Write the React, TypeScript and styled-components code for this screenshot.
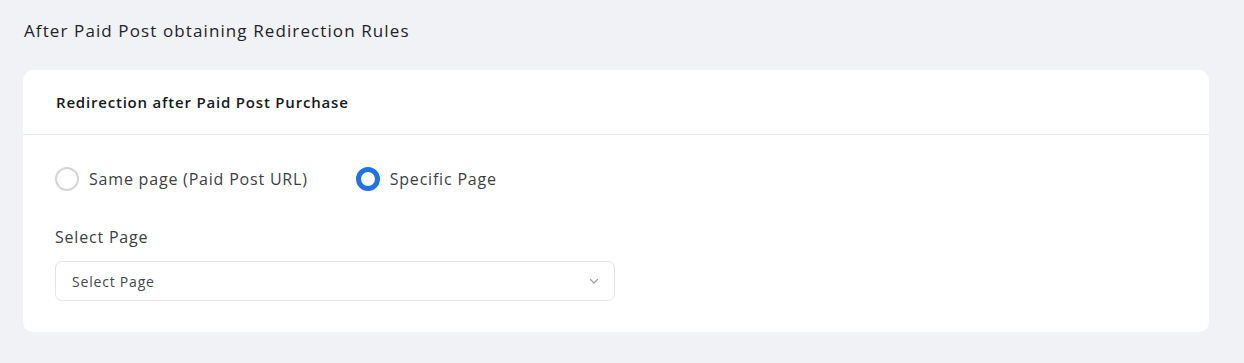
import styled, { createGlobalStyle } from 'styled-components'

const GlobalStyle = createGlobalStyle`
  body {
    margin: 0;
    background: #f1f2f6;
    font-family: 'Open Sans', 'Liberation Sans', sans-serif;
    letter-spacing: 0.05em;
  }
`

const Page = styled.div`
  padding: 19px 35px 31px 23px;
`

const PageTitle = styled.h2`
  margin: 0 0 0 1px;
  font-size: 17px;
  font-weight: 500;
  letter-spacing: 0.065em;
  color: #1e2227;
  line-height: 24px;
`

const Card = styled.div`
  margin-top: 27px;
  background: #ffffff;
  border-radius: 10px;
`

const CardHeader = styled.div`
  height: 64px;
  display: flex;
  align-items: center;
  padding: 0 33px;
  border-bottom: 1px solid #e6e7eb;
`

const CardTitle = styled.h3`
  margin: 0;
  font-size: 15px;
  font-weight: 600;
  color: #16191d;
`

const CardBody = styled.div`
  padding: 32px 32px 31px;
`

const RadioRow = styled.div`
  display: flex;
  gap: 48px;
`

const RadioOption = styled.label`
  display: flex;
  align-items: center;
  gap: 10px;
  font-size: 16px;
  color: #3b3f45;
  cursor: pointer;
`

const RadioCircle = styled.span<{ $checked?: boolean }>`
  box-sizing: border-box;
  width: 24px;
  height: 24px;
  border-radius: 50%;
  border: ${(p) => (p.$checked ? '5px solid #1f72ea' : '2px solid #d3d5da')};
  background: #fff;
`

const FieldLabel = styled.div`
  margin-top: 35px;
  font-size: 16px;
  color: #3b3f45;
`

const Select = styled.div`
  margin-top: 13px;
  width: 560px;
  height: 40px;
  box-sizing: border-box;
  border: 1px solid #e3e4e8;
  border-radius: 7px;
  display: flex;
  align-items: center;
  justify-content: space-between;
  padding: 0 14px 0 16px;
  font-size: 14px;
  color: #44484e;
`

function App() {
  return (
    <>
      <GlobalStyle />
      <Page>
        <PageTitle>After Paid Post obtaining Redirection Rules</PageTitle>
        <Card>
          <CardHeader>
            <CardTitle>Redirection after Paid Post Purchase</CardTitle>
          </CardHeader>
          <CardBody>
            <RadioRow>
              <RadioOption>
                <RadioCircle />
                Same page (Paid Post URL)
              </RadioOption>
              <RadioOption>
                <RadioCircle $checked />
                Specific Page
              </RadioOption>
            </RadioRow>
            <FieldLabel>Select Page</FieldLabel>
            <Select>
              Select Page
              <svg width="12" height="12" viewBox="0 0 12 12" fill="none">
                <path d="M2.5 4.5 6 8l3.5-3.5" stroke="#9a9ea5" strokeWidth="1.2" strokeLinecap="round" strokeLinejoin="round" />
              </svg>
            </Select>
          </CardBody>
        </Card>
      </Page>
    </>
  )
}

export default App
